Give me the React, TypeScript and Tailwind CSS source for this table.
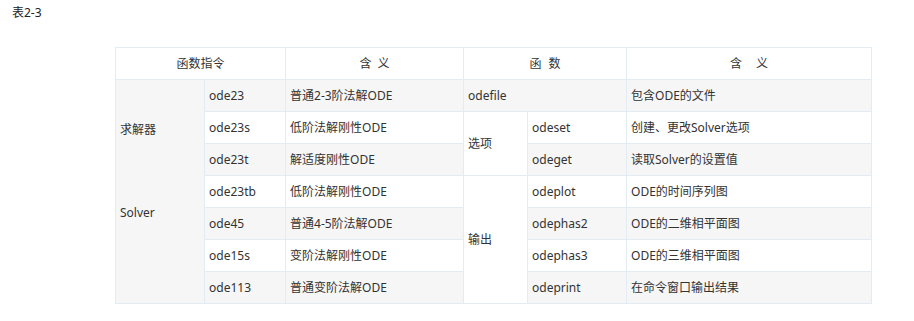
import React from "react";

const font = { fontFamily: '"Noto Sans", "Noto Sans CJK SC", sans-serif' };

const td = "border border-[#e3ebf4] px-[4px] align-middle text-[12px] leading-[20px] text-[#333]";

export default function App() {
  return (
    <div className="w-[914px] h-[321px] bg-white" style={font}>
      <div className="pl-[12px] pt-[3px] text-[12px] leading-[20px] text-[#222]">表2-3</div>
      <div className="pl-[115px] pt-[24px]">
        <table className="border-collapse table-fixed w-[756px]">
          <colgroup>
            <col className="w-[89px]" />
            <col className="w-[81px]" />
            <col className="w-[178px]" />
            <col className="w-[64px]" />
            <col className="w-[99px]" />
            <col className="w-[245px]" />
          </colgroup>
          <tbody>
            <tr className="h-[32px] bg-white">
              <td colSpan={2} className={`${td} text-center`}>函数指令</td>
              <td className={`${td} text-center`}>含<span className="inline-block w-[6px]" />义</td>
              <td colSpan={2} className={`${td} text-center`}>函<span className="inline-block w-[7px]" />数</td>
              <td className={`${td} text-center`}>含<span className="inline-block w-[14px]" />义</td>
            </tr>
            <tr className="h-[32px] bg-[#f6f6f6]">
              <td rowSpan={7} className={`${td} align-top pt-[40px]`}>
                <div>求解器</div>
                <div className="mt-[63px]">Solver</div>
              </td>
              <td className={td}>ode23</td>
              <td className={td}>普通2-3阶法解ODE</td>
              <td colSpan={2} className={td}>odefile</td>
              <td className={td}>包含ODE的文件</td>
            </tr>
            <tr className="h-[32px] bg-white">
              <td className={td}>ode23s</td>
              <td className={td}>低阶法解刚性ODE</td>
              <td rowSpan={2} className={td}>选项</td>
              <td className={td}>odeset</td>
              <td className={td}>创建、更改Solver选项</td>
            </tr>
            <tr className="h-[32px] bg-[#f6f6f6]">
              <td className={td}>ode23t</td>
              <td className={td}>解适度刚性ODE</td>
              <td className={td}>odeget</td>
              <td className={td}>读取Solver的设置值</td>
            </tr>
            <tr className="h-[32px] bg-white">
              <td className={td}>ode23tb</td>
              <td className={td}>低阶法解刚性ODE</td>
              <td rowSpan={4} className={`${td} bg-white`}>输出</td>
              <td className={td}>odeplot</td>
              <td className={td}>ODE的时间序列图</td>
            </tr>
            <tr className="h-[32px] bg-[#f6f6f6]">
              <td className={td}>ode45</td>
              <td className={td}>普通4-5阶法解ODE</td>
              <td className={td}>odephas2</td>
              <td className={td}>ODE的二维相平面图</td>
            </tr>
            <tr className="h-[32px] bg-white">
              <td className={td}>ode15s</td>
              <td className={td}>变阶法解刚性ODE</td>
              <td className={td}>odephas3</td>
              <td className={td}>ODE的三维相平面图</td>
            </tr>
            <tr className="h-[32px] bg-[#f6f6f6]">
              <td className={td}>ode113</td>
              <td className={td}>普通变阶法解ODE</td>
              <td className={td}>odeprint</td>
              <td className={td}>在命令窗口输出结果</td>
            </tr>
          </tbody>
        </table>
      </div>
    </div>
  );
}
